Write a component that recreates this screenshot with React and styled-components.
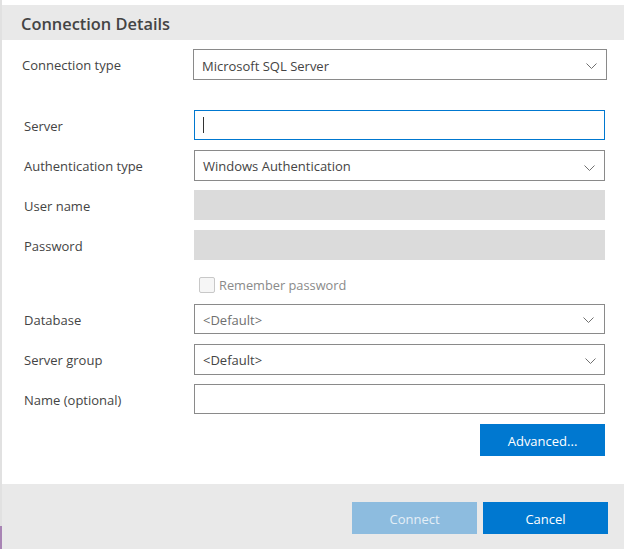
import React from 'react'
import styled, { createGlobalStyle } from 'styled-components'

const fieldBorder = '#8a8a8a'
const blue = '#0078d0'

const GlobalStyle = createGlobalStyle`
    html, body {
        margin: 0;
        padding: 0;
        background: #fff;
    }
    body {
        font-family: "Open Sans", "Noto Sans", "Liberation Sans", sans-serif;
        color: #444;
    }
`

const Page = styled.div`
    width: 624px;
    height: 549px;
    overflow: hidden;
    background: #fff;
    display: flex;
`

const Edge = styled.div`
    width: 2px;
    flex: none;
    display: flex;
    flex-direction: column;
    background: #e1e1e1;

    i {
        margin-top: auto;
        height: 23px;
        background: #a884b4;
    }
`

const Dialog = styled.div`
    flex: 1;
    min-width: 0;
    display: flex;
    flex-direction: column;
    padding-top: 5px;
`

const Header = styled.h1`
    margin: 0;
    height: 35px;
    padding-left: 19px;
    background: #e9e9e9;
    font-size: 16.4px;
    font-weight: 600;
    line-height: 38px;
    color: #444;
`

const Form = styled.div`
    flex: 1;
    display: flex;
    flex-direction: column;
    padding: 9px 19px 0 20px;
`

const Row = styled.div`
    height: ${props => props.$h || 31}px;
    margin-bottom: ${props => props.$mb === undefined ? 9 : props.$mb}px;
    padding-left: ${props => props.$top ? 0 : 2}px;
    margin-right: ${props => props.$top ? -2 : 0}px;
    display: grid;
    grid-template-columns: ${props => props.$top ? 171 : 170}px 1fr;
    align-items: start;
`

const Label = styled.label`
    margin-top: 7px;
    font-size: 13px;
    line-height: 18px;
    color: #444;
`

const Field = styled.div`
    box-sizing: border-box;
    height: ${props => props.$h || 31}px;
    padding: ${props => props.$drop ? 2 : 0}px 8px 0;
    display: flex;
    align-items: center;
    justify-content: space-between;
    background: #fff;
    border: 1px solid ${props => props.$focus ? blue : fieldBorder};
    font-size: 13px;
    color: ${props => props.$muted ? '#6f6f6f' : '#444'};
`

const Disabled = styled.div`
    height: 30px;
    background: #dbdbdb;
`

const Caret = styled.span`
    width: 1px;
    height: 16px;
    background: #333;
`

const Chevron = styled.svg`
    width: 11px;
    height: 6px;
    margin-right: ${props => props.$right}px;
    margin-top: ${props => props.$down}px;
    fill: none;
    stroke: #707070;
    stroke-width: 1;
`

const CheckRow = styled.div`
    height: 20px;
    margin: 0 2px 9px 177px;
    display: flex;
    align-items: center;
    gap: 4px;
    font-size: 12.8px;
    color: #8a8a8a;
`

const CheckBox = styled.span`
    box-sizing: border-box;
    width: 16px;
    height: 16px;
    border: 1px solid #c8c8c8;
    border-radius: 2px;
    background: #f6f6f6;
`

const Actions = styled.div`
    display: flex;
    justify-content: flex-end;
`

const Button = styled.button`
    width: 125px;
    height: 32px;
    padding: 2px 0 0;
    border: 0;
    background: ${props => props.disabled ? '#8dbcdf' : blue};
    color: ${props => props.disabled ? '#e4eff7' : '#fff'};
    font-family: inherit;
    font-size: 13px;
`

const Footer = styled.div`
    height: 65px;
    box-sizing: border-box;
    padding: 18px 16px 0 0;
    display: flex;
    justify-content: flex-end;
    gap: 6px;
    background: #e9e9e9;
`

function Arrow({ right = 1, down = 2 }) {
    return (
        <Chevron $right={right} $down={down} viewBox="0 0 11 6">
            <path d="M0.5 0.5 L5.5 5.5 L10.5 0.5" />
        </Chevron>
    )
}

function FormRow({ label, children, ...rest }) {
    return (
        <Row {...rest}>
            <Label>{label}</Label>
            {children}
        </Row>
    )
}

export default function App() {
    return (
        <Page>
            <GlobalStyle />
            <Edge><i /></Edge>
            <Dialog>
                <Header>Connection Details</Header>
                <Form>
                    <FormRow label="Connection type" $top $mb={30}>
                        <Field $drop>Microsoft SQL Server<Arrow down={1} /></Field>
                    </FormRow>
                    <FormRow label="Server" $h={30} $mb={10}>
                        <Field $focus $h={30}><Caret /></Field>
                    </FormRow>
                    <FormRow label="Authentication type">
                        <Field>Windows Authentication<Arrow down={4} /></Field>
                    </FormRow>
                    <FormRow label="User name" $h={30} $mb={10}>
                        <Disabled />
                    </FormRow>
                    <FormRow label="Password" $h={30} $mb={15}>
                        <Disabled />
                    </FormRow>
                    <CheckRow><CheckBox />Remember password</CheckRow>
                    <FormRow label="Database" $h={30} $mb={10}>
                        <Field $muted $drop $h={30}>&lt;Default&gt;<Arrow right={2} down={0} /></Field>
                    </FormRow>
                    <FormRow label="Server group">
                        <Field>&lt;Default&gt;<Arrow right={0} down={3} /></Field>
                    </FormRow>
                    <FormRow label="Name (optional)" $h={30} $mb={10}>
                        <Field $h={30} />
                    </FormRow>
                    <Actions><Button>Advanced...</Button></Actions>
                </Form>
                <Footer>
                    <Button disabled>Connect</Button>
                    <Button>Cancel</Button>
                </Footer>
            </Dialog>
        </Page>
    )
}
